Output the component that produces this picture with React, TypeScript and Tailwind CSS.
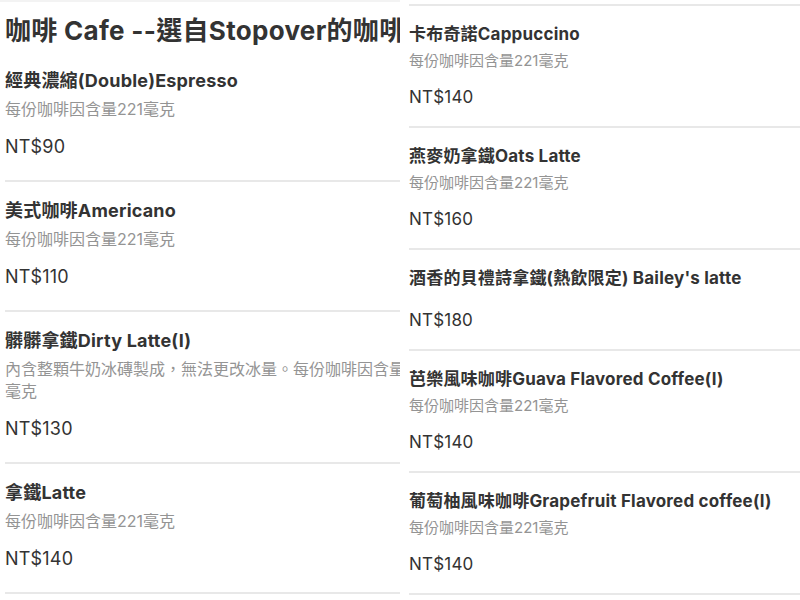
type MenuItem = {
  name: string;
  desc?: string[];
  price: string;
};

const caffeine = '每份咖啡因含量221毫克';

const leftItems: MenuItem[] = [
  { name: '經典濃縮(Double)Espresso', desc: [caffeine], price: 'NT$90' },
  { name: '美式咖啡Americano', desc: [caffeine], price: 'NT$110' },
  {
    name: '髒髒拿鐵Dirty Latte(I)',
    desc: ['內含整顆牛奶冰磚製成，無法更改冰量。每份咖啡因含量221', '毫克'],
    price: 'NT$130',
  },
  { name: '拿鐵Latte', desc: [caffeine], price: 'NT$140' },
];

const rightItems: MenuItem[] = [
  { name: '卡布奇諾Cappuccino', desc: [caffeine], price: 'NT$140' },
  { name: '燕麥奶拿鐵Oats Latte', desc: [caffeine], price: 'NT$160' },
  { name: "酒香的貝禮詩拿鐵(熱飲限定) Bailey's latte", price: 'NT$180' },
  { name: '芭樂風味咖啡Guava Flavored Coffee(I)', desc: [caffeine], price: 'NT$140' },
  { name: '葡萄柚風味咖啡Grapefruit Flavored coffee(I)', desc: [caffeine], price: 'NT$140' },
];

const font = { fontFamily: 'Inter, "Noto Sans CJK TC", sans-serif' };

function LeftRow({ item }: { item: MenuItem }) {
  return (
    <div className="pt-[17px] pb-[21px] border-b-2 border-[#e8e8e8]">
      <div className="text-[18px] leading-[24px] font-bold tracking-[0.2px] text-[#333] whitespace-nowrap">
        {item.name}
      </div>
      {item.desc && (
        <div className="mt-[5px] text-[16px] leading-[22px] text-[#949494]">
          {item.desc.map((line) => (
            <div key={line} className="whitespace-nowrap overflow-hidden">
              {line}
            </div>
          ))}
        </div>
      )}
      <div className="mt-[15px] text-[18px] leading-[24px] tracking-[0.2px] text-[#333]">{item.price}</div>
    </div>
  );
}

function RightRow({ item }: { item: MenuItem }) {
  return (
    <div className="pt-[17px] pb-[18px] border-b-2 border-[#e8e8e8]">
      <div className="text-[17px] leading-[22px] font-bold tracking-[0.2px] text-[#333] whitespace-nowrap">
        {item.name}
      </div>
      {item.desc ? (
        <div className="mt-[6px] text-[15px] leading-[20px] text-[#949494]">{item.desc[0]}</div>
      ) : null}
      <div
        className={`${item.desc ? 'mt-[15px]' : 'mt-[20px]'} text-[17px] leading-[22px] tracking-[0.2px] text-[#333]`}
      >
        {item.price}
      </div>
    </div>
  );
}

export default function App() {
  return (
    <div className="w-[800px] h-[600px] bg-white flex overflow-hidden" style={font}>
      <div className="w-[400px] shrink-0 overflow-hidden pl-[5px]">
        <div className="h-[2px] -ml-[5px] bg-[#f3f3f3]" />
        <h1 className="pt-[11px] mb-[3px] text-[26px] leading-[36px] font-bold tracking-[0.3px] text-[#333] whitespace-nowrap overflow-hidden">
          咖啡 Cafe --選自Stopover的咖啡豆
        </h1>
        {leftItems.map((item) => (
          <LeftRow key={item.name} item={item} />
        ))}
      </div>
      <div className="flex-1 pl-[9px] overflow-hidden">
        <div className="pt-[4px]">
          <div className="h-[2px] bg-[#e8e8e8]" />
        </div>
        {rightItems.map((item) => (
          <RightRow key={item.name} item={item} />
        ))}
      </div>
    </div>
  );
}
